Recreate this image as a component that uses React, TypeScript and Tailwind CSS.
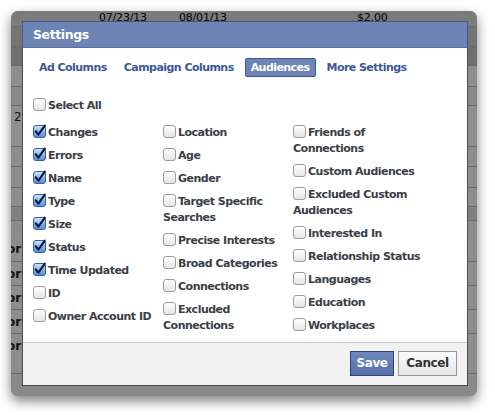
import React from "react";

const FONT = { fontFamily: '"DejaVu Sans", "Verdana", sans-serif' };

function Checked() {
  return (
    <svg width="13" height="13" viewBox="0 0 13 13" style={{ overflow: "visible" }}>
      <defs>
        <linearGradient id="cbOn" x1="0" y1="0" x2="0" y2="1">
          <stop offset="0" stopColor="#d3e6fc" />
          <stop offset="0.5" stopColor="#86b6ef" />
          <stop offset="1" stopColor="#4e8de4" />
        </linearGradient>
      </defs>
      <rect x="0.5" y="0.5" width="12" height="12" rx="2.5" fill="url(#cbOn)" stroke="#3d5f98" />
      <path d="M2.8 6.4 L5.4 9.6 L11.8 0.6" stroke="#0d1530" strokeWidth="2.1" fill="none" strokeLinecap="round" strokeLinejoin="round" />
    </svg>
  );
}

function Unchecked() {
  return (
    <svg width="13" height="13" viewBox="0 0 13 13">
      <defs>
        <linearGradient id="cbOff" x1="0" y1="0" x2="0" y2="1">
          <stop offset="0" stopColor="#ffffff" />
          <stop offset="1" stopColor="#e4e4e4" />
        </linearGradient>
      </defs>
      <rect x="0.5" y="0.5" width="12" height="12" rx="2.5" fill="url(#cbOff)" stroke="#9c9c9c" />
    </svg>
  );
}

function Item({ label, checked }: { label: string; checked?: boolean }) {
  return (
    <div className="leading-[16px] mb-[7px] text-[11px] font-bold text-[#3a3e47] tracking-[-0.5px]">
      <span className="inline-block align-[-2px] mr-[2px]">{checked ? <Checked /> : <Unchecked />}</span>
      {label}
    </div>
  );
}

const col1: [string, boolean][] = [
  ["Changes", true],
  ["Errors", true],
  ["Name", true],
  ["Type", true],
  ["Size", true],
  ["Status", true],
  ["Time Updated", true],
  ["ID", false],
  ["Owner Account ID", false],
];
const col2 = [
  "Location",
  "Age",
  "Gender",
  "Target Specific Searches",
  "Precise Interests",
  "Broad Categories",
  "Connections",
  "Excluded Connections",
];
const col3 = [
  "Friends of Connections",
  "Custom Audiences",
  "Excluded Custom Audiences",
  "Interested In",
  "Relationship Status",
  "Languages",
  "Education",
  "Workplaces",
];

type Row = { h: number; bg: string; line?: boolean; content?: React.ReactNode };

const rows: Row[] = [
  {
    h: 15,
    bg: "#7b7b7b",
    content: (
      <div className="relative h-[15px] text-[11px] text-black leading-[11px] tracking-[-0.2px]">
        <span className="absolute left-[88px] top-[1px]">07/23/13</span>
        <span className="absolute left-[168px] top-[1px]">08/01/13</span>
        <span className="absolute left-[346px] top-[1px]">$2.00</span>
      </div>
    ),
  },
  { h: 20, bg: "#747474", line: true },
  { h: 19, bg: "#6f6f6f", line: true },
  { h: 21, bg: "#8e8e8e", line: true },
  { h: 19, bg: "#8a8a8a", line: true },
  {
    h: 41,
    bg: "#8f8f8f",
    line: true,
    content: <div className="pl-[3px] pt-[4px] text-[12px] text-[#111] leading-[14px]">2</div>,
  },
  { h: 20, bg: "#8d8d8d", line: true },
  { h: 21, bg: "#8d8d8d", line: true },
  { h: 19, bg: "#8d8d8d", line: true },
  { h: 14, bg: "#808080", line: true },
  { h: 17, bg: "#8c8c8c", line: true },
  ...[0, 1, 2, 3, 4].map((i) => ({
    h: 24,
    bg: "#8d8d8d",
    line: i > 0,
    content: <div className="-ml-[4px] pt-[5px] text-[12px] text-[#111] leading-[14px] font-bold">or</div>,
  })),
  { h: 16, bg: "#8d8d8d", line: false },
  { h: 24, bg: "#8a8a8a", line: true },
];

export default function App() {
  return (
    <div className="w-[495px] h-[415px] bg-white relative overflow-hidden" style={FONT}>
      <div className="absolute left-[11px] top-[11px] w-[466px] h-[385px] rounded-[7px] overflow-hidden shadow-[0_5px_12px_rgba(0,0,0,0.5)] bg-[#8c8c8c] flex flex-col">
        {rows.map((r, i) => (
          <div
            key={i}
            className={"shrink-0 overflow-hidden " + (r.line ? "border-t border-[#6a6a6a]" : "")}
            style={{ height: r.h, background: r.bg }}
          >
            {r.content}
          </div>
        ))}
      </div>

      {/* dialog */}
      <div className="absolute left-[22px] top-[21px] w-[446px] h-[365px] border border-[#4d4d4d] bg-white flex flex-col">
        <div className="h-[27px] shrink-0 bg-[#6d84b4] border-b border-[#5a6f9e] flex items-center pl-[10px] -mx-px -mt-px border-x border-t border-x-[#3b5998] border-t-[#3b5998]">
          <span className="text-white font-bold text-[12.5px] tracking-[-0.4px] pt-[2px]">Settings</span>
        </div>
        <div className="flex-1 min-h-0 overflow-hidden px-[10px] pt-[10px]">
          <div className="flex gap-[5px] text-[11px] font-bold tracking-[-0.55px] leading-[17px]">
            {["Ad Columns", "Campaign Columns", "Audiences", "More Settings"].map((t) => (
              <div
                key={t}
                className={
                  "px-[5px] border rounded-[2px] " +
                  (t === "Audiences"
                    ? "bg-[#6d84b4] border-[#3b5998] text-white"
                    : "border-transparent text-[#3b5998]")
                }
              >
                {t}
              </div>
            ))}
          </div>
          <div className="mt-[21px]">
            <Item label="Select All" />
          </div>
          <div className="grid grid-cols-[130px_130px_140px] mt-[11px]">
            <div>
              {col1.map(([l, c]) => (
                <Item key={l} label={l} checked={c} />
              ))}
            </div>
            <div>
              {col2.map((l) => (
                <Item key={l} label={l} />
              ))}
            </div>
            <div>
              {col3.map((l) => (
                <Item key={l} label={l} />
              ))}
            </div>
          </div>
        </div>
        <div className="h-[43px] shrink-0 border-t border-[#cccccc] bg-[#f2f2f2] flex justify-end items-start pt-[8px] pr-[10px] gap-[4px]">
          <button className="h-[25px] w-[44px] bg-gradient-to-b from-[#6f87bb] to-[#5670a6] border border-[#29447e] text-white text-[12px] font-bold tracking-[-0.4px] leading-[23px]">
            Save
          </button>
          <button className="h-[25px] w-[59px] bg-gradient-to-b from-[#fafafa] to-[#e8e8e8] border border-[#999999] text-[#333] text-[12px] font-bold tracking-[-0.4px] leading-[23px]">
            Cancel
          </button>
        </div>
      </div>
    </div>
  );
}
